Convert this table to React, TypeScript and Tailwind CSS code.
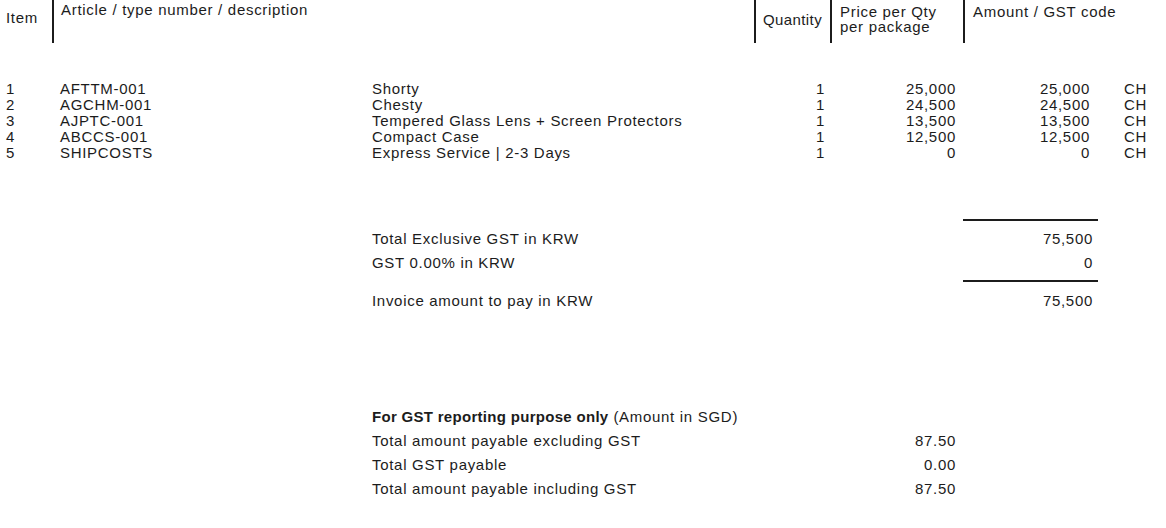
const rows = [
  { no: "1", article: "AFTTM-001", desc: "Shorty", qty: "1", price: "25,000", amount: "25,000", code: "CH" },
  { no: "2", article: "AGCHM-001", desc: "Chesty", qty: "1", price: "24,500", amount: "24,500", code: "CH" },
  { no: "3", article: "AJPTC-001", desc: "Tempered Glass Lens + Screen Protectors", qty: "1", price: "13,500", amount: "13,500", code: "CH" },
  { no: "4", article: "ABCCS-001", desc: "Compact Case", qty: "1", price: "12,500", amount: "12,500", code: "CH" },
  { no: "5", article: "SHIPCOSTS", desc: "Express Service | 2-3 Days", qty: "1", price: "0", amount: "0", code: "CH" },
];

const gstRows = [
  { label: "Total amount payable excluding GST", value: "87.50" },
  { label: "Total GST payable", value: "0.00" },
  { label: "Total amount payable including GST", value: "87.50" },
];

function App() {
  return (
    <main className="w-[1166px] h-[528px] bg-white text-[#1c1c1c] text-[15px] tracking-[0.7px] overflow-hidden" style={{ fontFamily: '"Liberation Sans", Arial, sans-serif' }}>
      {/* header */}
      <div className="grid grid-cols-[52px_702px_76px_133px_1fr] h-[43px] leading-[15px]">
        <div className="pl-[6px] flex items-center pb-[8px]">Item</div>
        <div className="border-l-2 border-[#1c1c1c] pl-[7px] pt-[2px]">Article / type number / description</div>
        <div className="border-l-2 border-[#1c1c1c] pl-[7px] flex items-center pb-[5px] tracking-[0.4px]">Quantity</div>
        <div className="border-l-2 border-[#1c1c1c] pl-[8px] pt-[4px]">
          <div>Price per Qty</div>
          <div>per package</div>
        </div>
        <div className="border-l-2 border-[#1c1c1c] pl-[8px] pt-[4px]">Amount / GST code</div>
      </div>

      {/* items */}
      <div className="mt-[38px] leading-[16px]">
        {rows.map((r) => (
          <div key={r.no} className="grid grid-cols-[52px_320px_382px_76px_133px_134px_1fr] h-[16px]">
            <div className="pl-[6px]">{r.no}</div>
            <div className="pl-[8px]">{r.article}</div>
            <div>{r.desc}</div>
            <div className="text-right pr-[5px]">{r.qty}</div>
            <div className="text-right pr-[7px]">{r.price}</div>
            <div className="text-right pr-[7px]">{r.amount}</div>
            <div className="pl-[27px]">{r.code}</div>
          </div>
        ))}
      </div>

      {/* totals */}
      <div className="mt-[58px] pl-[372px]">
        <div className="grid grid-cols-[591px_135px]">
          <div />
          <div className="h-[2px] bg-[#1c1c1c]" />
        </div>
        <div className="grid grid-cols-[591px_135px] h-[24px] items-center mt-[6px]">
          <div>Total Exclusive GST in KRW</div>
          <div className="text-right pr-[5px]">75,500</div>
        </div>
        <div className="grid grid-cols-[591px_135px] h-[24px] items-center">
          <div>GST 0.00% in KRW</div>
          <div className="text-right pr-[5px]">0</div>
        </div>
        <div className="grid grid-cols-[591px_135px] mt-[5px]">
          <div />
          <div className="h-[2px] bg-[#1c1c1c]" />
        </div>
        <div className="grid grid-cols-[591px_135px] h-[24px] items-center mt-[7px]">
          <div>Invoice amount to pay in KRW</div>
          <div className="text-right pr-[5px]">75,500</div>
        </div>
      </div>

      {/* GST reporting */}
      <div className="mt-[92px] pl-[372px] w-[956px]">
        <div className="h-[24px] flex items-center">
          <span className="font-bold tracking-[0.3px]">For GST reporting purpose only</span>
          <span>&nbsp;(Amount in SGD)</span>
        </div>
        {gstRows.map((g) => (
          <div key={g.label} className="h-[24px] flex items-center justify-between">
            <span>{g.label}</span>
            <span>{g.value}</span>
          </div>
        ))}
      </div>
    </main>
  );
}

export default App;
